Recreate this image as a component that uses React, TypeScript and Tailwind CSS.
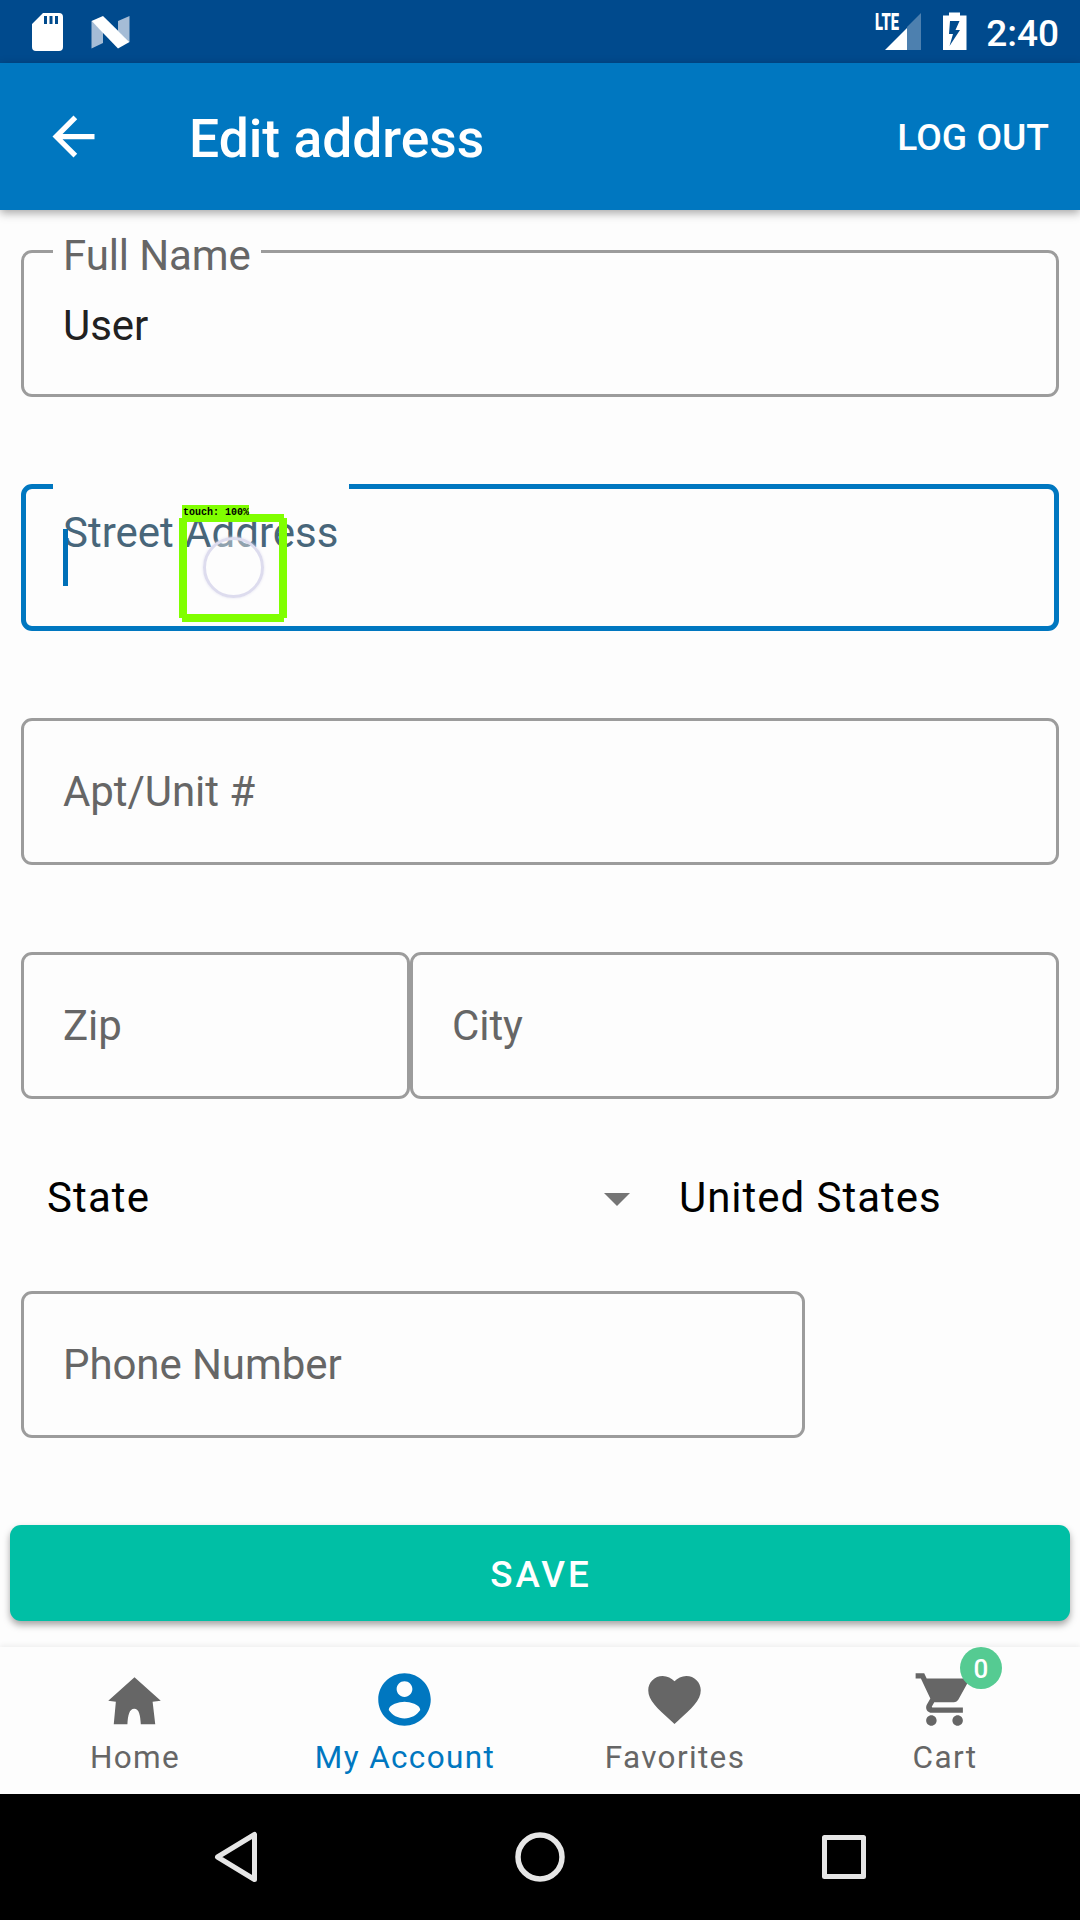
import React from "react";

type FieldProps = {
  label: string;
  value?: string;
  className: string;
};

function Field({ label, value, className }: FieldProps) {
  return (
    <div className={"relative box-border h-[147px] rounded-[11px] border-[3px] border-[#9c9c9c] " + className}>
      {value ? (
        <>
          <span className="absolute -top-[22px] left-[29px] h-[50px] bg-[#fdfdfd] pl-[10px] pr-[10px] text-[42px] leading-[50px] tracking-[-0.100px] text-[#666]">
            {label}
          </span>
          <span className="absolute left-[39px] top-[48px] text-[42px] leading-[50px] tracking-[-0.100px] text-[#212121]">{value}</span>
        </>
      ) : (
        <div className="flex h-full items-center pl-[39px] text-[42px] leading-[50px] tracking-[-0.080px] text-[#666]">{label}</div>
      )}
    </div>
  );
}

function StatusBar() {
  return (
    <div className="flex h-[63px] items-center justify-between bg-[#004a8d]">
      <svg width="150" height="63" viewBox="0 0 150 63">
        <path fillRule="evenodd" fill="#fff" d="M43 13H59Q63 13 63 17V47Q63 51 59 51H36Q32 51 32 47V24ZM44 16V24H47V16ZM49.500 16V24H52.500V16ZM55 16V24H58V16Z" />
        <path fill="#a5bcd6" d="M91.500 21L103 32V43L91.500 48.500ZM129.500 16V42L118 31V21Z" />
        <path fill="#fff" d="M91.500 21L103 16L129.500 42L118 48.500Z" />
      </svg>
      <div className="relative flex items-center">
        <svg width="110" height="63" viewBox="870 0 110 63">
          <path fill="#4d80af" d="M921 13V50H907V27Z" />
          <path fill="#fff" d="M907 28V50H885Z" />
          <path fillRule="evenodd" fill="#fff" d="M949 12.500H960V15.500H966.500V50H943V15.500H949ZM950 21L949 34H953L949.500 46L960 30H955.500L959.500 21Z" />
        </svg>
        <span className="absolute left-[5px] top-[11px] origin-left scale-x-[0.640] text-[23px] font-black leading-[24px] text-white">LTE</span>
        <span className="ml-[6px] mr-[21px] pt-[4px] text-[37px] font-medium leading-[44px] text-white">2:40</span>
      </div>
    </div>
  );
}

function AppBar() {
  return (
    <header className="relative z-10 flex h-[147px] items-center bg-[#0077c0] text-white shadow-[0_3px_9px_rgba(0,0,0,0.35)]">
      <svg className="ml-[42px]" width="63" height="63" viewBox="0 0 24 24" fill="#fff">
        <path d="M20 11H7.830l5.590-5.590L12 4l-8 8 8 8 1.410-1.410L7.830 13H20v-2z" />
      </svg>
      <h1 className="ml-[84px] pt-[5px] text-[53.400px] font-medium leading-[62px]">Edit address</h1>
      <span className="ml-auto mr-[31px] text-[37.200px] font-medium leading-[44px]">LOG OUT</span>
    </header>
  );
}

function StreetField() {
  return (
    <div className="relative mt-[87px] h-[147px] rounded-[11px] border-[5px] border-[#0077c0]">
      <div className="absolute -top-[5px] left-[27px] h-[5px] w-[296px] bg-[#fdfdfd]" />
      <span className="absolute left-[37px] top-[19px] whitespace-nowrap text-[42px] leading-[50px] text-[#48667a]">Street Address</span>
      <div className="absolute left-[37px] top-[40px] h-[57px] w-[5px] bg-[#0070b8]" />
      <div className="absolute left-[177px] top-[48px] h-[61px] w-[61px] rounded-full border-[3px] border-[#dddcee] bg-[#fdfdfd]/40 shadow-[0_0_3px_#e4e3f2]" />
      <div className="absolute left-[153px] top-[25px] h-[108px] w-[108px] border-[8px] border-[#80ff00] [clip-path:polygon(3px_0,105px_0,105px_4px,108px_4px,108px_104px,105px_104px,105px_108px,3px_108px,3px_104px,0_104px,0_4px,3px_4px)]" />
      <div className="absolute left-[156px] top-[16px] flex h-[12px] w-[67px] items-center bg-[#80ff00]">
        <span className="whitespace-pre pl-px pt-[4px] font-['Liberation_Mono'] text-[10px] font-bold leading-[10px] text-black">touch: 100%</span>
      </div>
    </div>
  );
}

const tabs = [
  { label: "Home", color: "text-[#666]" },
  { label: "My Account", color: "text-[#0077c0]" },
  { label: "Favorites", color: "text-[#666]" },
  { label: "Cart", color: "text-[#666]" },
];

const tabIcons = [
  <path d="M12 3.500L2 12.500L4.900 12.900L4.100 21.400H9.300C9.500 18 10 15.500 11.900 15.500S14.200 18 14.400 21.400H19.900L18.900 12.900L22 12.500Z" />,
  <path d="M12 2C6.480 2 2 6.480 2 12s4.480 10 10 10 10-4.480 10-10S17.520 2 12 2zm0 3c1.660 0 3 1.340 3 3s-1.340 3-3 3-3-1.340-3-3 1.340-3 3-3zm0 14.200c-2.500 0-4.710-1.280-6-3.220.030-1.990 4-3.080 6-3.080 1.990 0 5.970 1.090 6 3.080-1.290 1.940-3.500 3.220-6 3.220z" />,
  <path d="M12 21.350l-1.450-1.320C5.400 15.360 2 12.280 2 8.500 2 5.420 4.420 3 7.500 3c1.740 0 3.410.810 4.500 2.090C13.090 3.810 14.760 3 16.500 3 19.580 3 22 5.420 22 8.500c0 3.780-3.400 6.860-8.550 11.540L12 21.350z" />,
  <path d="M7 18c-1.100 0-1.990.900-1.990 2S5.900 22 7 22s2-.900 2-2-.900-2-2-2zM1 2v2h2l3.600 7.590-1.350 2.450c-.160.280-.250.610-.250.960 0 1.100.900 2 2 2h12v-2H7.420c-.140 0-.250-.110-.250-.250l.030-.120.900-1.630h7.450c.750 0 1.410-.410 1.750-1.030l3.580-6.490c.080-.140.120-.310.120-.480 0-.550-.450-1-1-1H5.210l-.940-2H1zm16 16c-1.100 0-1.990.900-1.990 2s.890 2 1.990 2 2-.900 2-2-.900-2-2-2z" />,
];

export default function App() {
  return (
    <div className="flex h-[1920px] w-[1080px] flex-col overflow-hidden bg-[#fdfdfd] font-[Roboto,sans-serif]">
      <StatusBar />
      <AppBar />
      <main className="flex h-[1437px] flex-col px-[21px] pt-[40px]">
        <Field label="Full Name" value="User" className="" />
        <StreetField />
        <Field label="Apt/Unit #" className="mt-[87px]" />
        <div className="mt-[87px] flex">
          <Field label="Zip" className="w-[389px]" />
          <Field label="City" className="flex-1" />
        </div>
        <div className="mt-[74px] flex h-[50px] items-center text-[42px] leading-[50px] text-black">
          <span className="w-[582.500px] pl-[26px] tracking-[1.100px]">State</span>
          <svg className="mt-[2px]" width="26" height="13" viewBox="0 0 26 13">
            <path d="M0 0H26L13 13Z" fill="#757575" />
          </svg>
          <span className="ml-[49.500px] tracking-[0.970px]">United States</span>
        </div>
        <Field label="Phone Number" className="mt-[68px] w-[784px]" />
        <button className="-mx-[11px] mt-[87px] flex h-[96px] items-center justify-center rounded-[11px] bg-[#00bfa5] pl-[2px] pt-[4px] text-[36.750px] font-medium tracking-[3px] text-white shadow-[0_4px_7px_rgba(0,0,0,0.35)]">
          SAVE
        </button>
      </main>
      <nav className="relative z-10 grid h-[147px] grid-cols-4 bg-[#fdfdfd] shadow-[0_-2px_5px_rgba(0,0,0,0.06)]">
        {tabs.map((tab, i) => (
          <div key={tab.label} className={"relative flex flex-col items-center pt-[21px] " + tab.color}>
            <svg className="mr-[2px]" width="63" height="63" viewBox="0 0 24 24" fill="currentColor">
              {tabIcons[i]}
            </svg>
            <span className="mt-[8px] text-[31.500px] leading-[38px] tracking-[1.350px]">{tab.label}</span>
            {i === 3 && (
              <span className="absolute left-[150px] top-0 flex h-[42px] w-[42px] items-center justify-center rounded-full bg-[#55cb92] pt-[2px] text-[26px] font-medium text-white">0</span>
            )}
          </div>
        ))}
      </nav>
      <footer className="flex h-[126px] items-center bg-black">
        <svg width="1080" height="126" viewBox="0 0 1080 126" fill="none" stroke="#e6e6e6" strokeLinejoin="round">
          <path d="M254.500 40.500V85.500L217.500 63Z" strokeWidth="5" />
          <circle cx="540" cy="63" r="22" strokeWidth="5.500" />
          <rect x="824.500" y="43.500" width="39" height="39" strokeWidth="5" />
        </svg>
      </footer>
    </div>
  );
}
